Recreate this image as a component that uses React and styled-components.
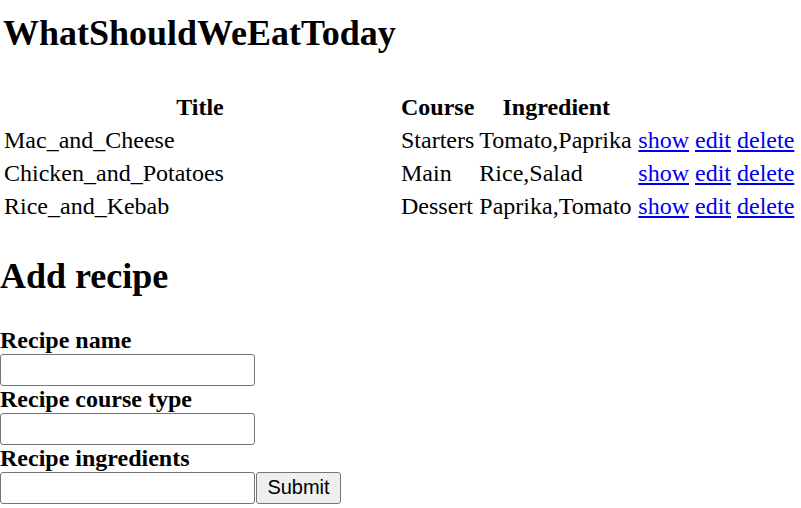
import React from 'react'
import styled, { createGlobalStyle } from 'styled-components'

const GlobalStyle = createGlobalStyle`
  body {
    margin: 0;
    background: #fff;
    color: #000;
    font-family: "Liberation Serif", "Times New Roman", serif;
    font-size: 24px;
  }
`

const recipes = [
  { title: 'Mac_and_Cheese', course: 'Starters', ingredient: 'Tomato,Paprika' },
  { title: 'Chicken_and_Potatoes', course: 'Main', ingredient: 'Rice,Salad' },
  { title: 'Rice_and_Kebab', course: 'Dessert', ingredient: 'Paprika,Tomato' },
]

function App() {
  return (
    <>
      <GlobalStyle />
      <Page>
        <Heading $indent>WhatShouldWeEatToday</Heading>
        <RecipeTable>
          <thead>
            <tr>
              <Th $width={392}>Title</Th>
              <Th>Course</Th>
              <Th $width={154}>Ingredient</Th>
              <Th></Th>
            </tr>
          </thead>
          <tbody>
            {recipes.map((r) => (
              <tr key={r.title}>
                <Td>{r.title}</Td>
                <Td>{r.course}</Td>
                <Td>{r.ingredient}</Td>
                <Td>
                  <Link href="#">show</Link> <Link href="#">edit</Link> <Link href="#">delete</Link>
                </Td>
              </tr>
            ))}
          </tbody>
        </RecipeTable>

        <Heading $top={31}>Add recipe</Heading>
        <Form onSubmit={(e) => e.preventDefault()}>
          <Label>Recipe name</Label>
          <Row>
            <Input type="text" />
          </Row>
          <Label>Recipe course type</Label>
          <Row>
            <Input type="text" />
          </Row>
          <Label>Recipe ingredients</Label>
          <Row>
            <Input type="text" />
            <Button type="submit">Submit</Button>
          </Row>
        </Form>
      </Page>
    </>
  )
}

export default App

const Page = styled.div`
  padding-top: 12px;
`

const Heading = styled.h2`
  margin: ${(p) => (p.$top ? `${p.$top}px` : '0')} 0 0 0;
  padding-left: ${(p) => (p.$indent ? '3px' : '0')};
  font-size: 36px;
  line-height: 42px;
  font-weight: bold;
`

const RecipeTable = styled.table`
  margin-top: 35px;
  border-collapse: separate;
  border-spacing: 3px;
`

const Th = styled.th`
  width: ${(p) => (p.$width ? `${p.$width}px` : 'auto')};
  padding: 1px;
  font-size: 24px;
  line-height: 28px;
  font-weight: bold;
  text-align: center;
`

const Td = styled.td`
  padding: 1px;
  font-size: 24px;
  line-height: 28px;
  white-space: nowrap;
`

const Link = styled.a`
  color: #0000ee;
  text-decoration: underline;
`

const Form = styled.form`
  margin-top: 30px;
`

const Label = styled.label`
  display: block;
  font-size: 24px;
  line-height: 27px;
  font-weight: bold;
`

const Row = styled.div`
  display: flex;
  align-items: flex-start;
  gap: 1px;
`

const Input = styled.input`
  box-sizing: border-box;
  width: 255px;
  height: 32px;
  margin: 0;
  padding: 1px 3px;
  border: 1px solid #767676;
  border-radius: 3px;
  background: #fff;
  font-size: 20px;
`

const Button = styled.button`
  box-sizing: border-box;
  width: 85px;
  height: 32px;
  margin: 0;
  padding: 0 9px 1px;
  border: 1px solid #767676;
  border-radius: 3px;
  background: #efefef;
  color: #000;
  font-family: "Liberation Sans", Arial, sans-serif;
  font-size: 20px;
`
